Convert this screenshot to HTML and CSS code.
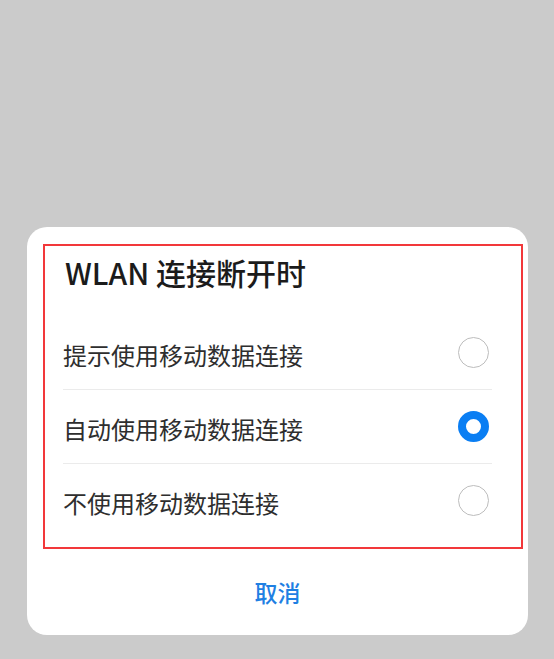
FILE: index.html
```html
<!DOCTYPE html>
<html lang="zh-CN">
<head>
  <meta charset="UTF-8">
  <meta name="viewport" content="width=device-width, initial-scale=1.0">
  <title>WLAN 连接断开时</title>
  <link rel="stylesheet" href="styles.css">
</head>
<body>

  <div class="sheet">
    <!-- Highlighted options block -->
    <div class="options-box">
      <h1 class="sheet-title">WLAN 连接断开时</h1>

      <div class="option">
        <span class="option-label">提示使用移动数据连接</span>
        <span class="radio"></span>
      </div>
      <div class="option">
        <span class="option-label">自动使用移动数据连接</span>
        <span class="radio checked"></span>
      </div>
      <div class="option">
        <span class="option-label">不使用移动数据连接</span>
        <span class="radio"></span>
      </div>
    </div>

    <button class="cancel-button">取消</button>
  </div>

</body>
</html>
```

FILE: styles.css
```css
* {
  margin: 0;
  padding: 0;
  box-sizing: border-box;
  font-family: 'Noto Sans', 'Noto Sans CJK SC', sans-serif;
}

body {
  background: #cbcbcb;
  width: 554px;
  height: 659px;
  overflow: hidden;
  padding-top: 227px;
  padding-left: 27px;
}

/* Bottom sheet card */
.sheet {
  width: 501px;
  height: 408px;
  background: #fff;
  border-radius: 20px;
  padding: 17px 5px 0 16px;
  display: flex;
  flex-direction: column;
}

/* Red annotation frame around title + options */
.options-box {
  border: 2px solid #f2383a;
  padding: 8px 29px 10px 18px;
}

.sheet-title {
  font-family: 'Noto Sans CJK SC', sans-serif;
  font-size: 30px;
  font-weight: 500;
  line-height: 36px;
  color: #1b1b1b;
  padding-left: 2px;
  margin-bottom: 26px;
}

/* Option rows */
.option {
  height: 74px;
  display: flex;
  align-items: center;
  justify-content: space-between;
  border-bottom: 1px solid #ebebeb;
  padding-right: 3px;
}

.option:last-child {
  border-bottom: none;
  height: 73px;
}

.option-label {
  font-size: 24px;
  color: #2e2e2e;
  padding-top: 3px;
}

.radio {
  width: 31px;
  height: 31px;
  border-radius: 50%;
  border: 1.5px solid #bdbdbd;
  background: #fff;
}

.radio.checked {
  border: 8px solid #0a7ef3;
}

/* Cancel action */
.cancel-button {
  flex: 1;
  margin-left: -16px;
  margin-right: -5px;
  background: transparent;
  border: none;
  font-size: 23px;
  font-weight: 500;
  color: #1f80e3;
  cursor: pointer;
}
```
